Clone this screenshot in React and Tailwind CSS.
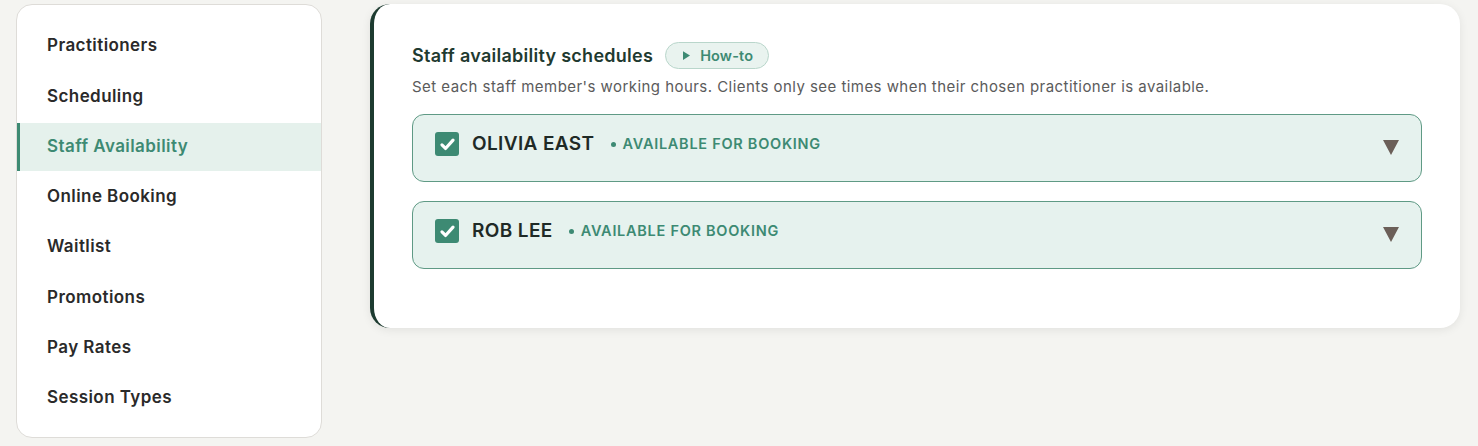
import React from 'react';

const navItems = [
  'Practitioners',
  'Scheduling',
  'Staff Availability',
  'Online Booking',
  'Waitlist',
  'Promotions',
  'Pay Rates',
  'Session Types',
];

const staff = ['Olivia East', 'Rob Lee'];

const CheckBox = () => (
  <span className="flex h-6 w-6 shrink-0 items-center justify-center rounded-[3px] bg-[#3d8a73]">
    <svg viewBox="0 0 24 24" className="h-[19px] w-[19px]" fill="none" stroke="white" strokeWidth="4" strokeLinecap="round" strokeLinejoin="round">
      <path d="M5 12.5l4.5 4.5L19 6.5" />
    </svg>
  </span>
);

const StaffRow = ({ name }) => (
  <div className="flex h-[68px] items-start justify-between rounded-[12px] border border-[#5f9a85] bg-[#e6f2ee] pl-[22px] pr-[22px] pt-[15px]">
    <div className="flex items-center">
      <CheckBox />
      <span className="ml-[13px] text-[19px] font-semibold tracking-[0.02em] text-[#1f2a26]">
        {name.toUpperCase()}
      </span>
      <span className="ml-[16px] flex items-center text-[14.5px] font-semibold tracking-[0.05em] text-[#3d8a73]">
        <span className="mr-[7px] h-[5px] w-[5px] rounded-full bg-[#3d8a73]" />
        AVAILABLE FOR BOOKING
      </span>
    </div>
    <svg viewBox="0 0 16 15" className="mt-[10px] h-[15px] w-[16px]">
      <polygon points="0,0 16,0 8,15" fill="#6b5f58" />
    </svg>
  </div>
);

export default function App() {
  return (
    <div className="min-h-[446px] bg-[#f4f4f1] pl-4 pt-1 font-['Inter',sans-serif]">
      <div className="flex items-start">
        <nav className="flex w-[306px] flex-col gap-[2.3px] rounded-[16px] border border-[#dedcd8] bg-white pb-[15px] pt-[17px]">
          {navItems.map((item) => {
            const active = item === 'Staff Availability';
            return (
              <div
                key={item}
                className={`flex h-12 items-center border-l-[3px] pl-[27px] text-[17px] font-semibold tracking-[0.025em] ${
                  active
                    ? 'border-[#3d8a73] bg-[#e5f1ec] text-[#3d8a73]'
                    : 'border-transparent text-[#2a2a2a]'
                }`}
              >
                {item}
              </div>
            );
          })}
        </nav>

        <section className="ml-[48px] w-[1090px] rounded-[20px] border-l-4 border-[#1d3b30] bg-white pb-[59px] pl-[38px] pr-[38px] pt-[38px] shadow-[0_2px_10px_rgba(0,0,0,0.08)]">
          <div className="flex items-center">
            <h2 className="text-[18px] font-semibold tracking-[0.015em] text-[#1f3a30]">Staff availability schedules</h2>
            <button className="ml-[12px] flex h-[27px] items-center rounded-full border border-[#b9d6cb] bg-[#e9f3ef] pl-[17px] pr-[15px] text-[14.5px] font-semibold tracking-[0.01em] text-[#3d8a73]">
              <svg viewBox="0 0 8 10" className="mr-[10px] h-[9px] w-[7px]">
                <polygon points="0,0 8,5 0,10" fill="#3d8a73" />
              </svg>
              How-to
            </button>
          </div>
          <p className="mt-[8px] text-[15px] leading-5 tracking-[0.03em] text-[#5b5b5b]">
            Set each staff member's working hours. Clients only see times when their chosen practitioner is available.
          </p>
          <div className="mt-[17px] flex flex-col gap-[19px]">
            {staff.map((name) => (
              <StaffRow key={name} name={name} />
            ))}
          </div>
        </section>
      </div>
    </div>
  );
}
